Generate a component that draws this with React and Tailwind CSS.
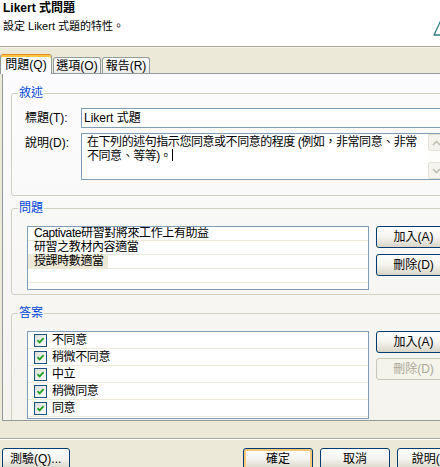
import React from "react";

const Btn = ({ children, className = "", disabled = false, def = false }) => (
  <div
    className={`flex h-[22px] shrink-0 items-center justify-center rounded-[3px] border leading-[14px] ${
      disabled
        ? "border-[#c9c7ba] bg-[#f5f4ea] text-[#aca899]"
        : "border-[#003c74] bg-linear-to-b from-white via-[#f4f3ee] to-[#d9d5c8] text-black"
    } ${def ? "shadow-[inset_0_0_0_2px_#f6c67a]" : ""} ${className}`}
  >
    {children}
  </div>
);

const Check = () => (
  <span className="flex h-[13px] w-[13px] shrink-0 items-center justify-center border border-[#1c5180] bg-linear-to-br from-[#dcdcd7] to-white">
    <svg width="9" height="9" viewBox="0 0 9 9">
      <path d="M1.5 4.2 L3.6 6.4 L7.6 2.2" fill="none" stroke="#21a121" strokeWidth="1.8" />
    </svg>
  </span>
);

const Legend = ({ children }) => (
  <legend className="ml-[6px] px-[1px] leading-[14px] text-[#0046d5]">{children}</legend>
);

const ScrollBtn = ({ up }) => (
  <div className="flex h-[17px] items-center justify-center rounded-[2px] border border-[#e3e1d6] bg-[#f4f3ee]">
    <svg width="9" height="6" viewBox="0 0 9 6">
      <path
        d={up ? "M1 5 L4.5 1.5 L8 5" : "M1 1 L4.5 4.5 L8 1"}
        fill="none"
        stroke="#c2c0b4"
        strokeWidth="1.6"
      />
    </svg>
  </div>
);

export default function App() {
  const questions = ["Captivate研習對將來工作上有助益", "研習之教材內容適當", "授課時數適當", "", ""];
  const answers = ["不同意", "稍微不同意", "中立", "稍微同意", "同意"];
  return (
    <div className="relative h-[467px] w-[440px] overflow-hidden bg-[#ece9d8] font-['Liberation_Sans','Noto_Sans_CJK_TC',sans-serif] text-[12px] leading-[14px] text-black">
      <div className="w-[476px]">
        {/* header */}
        <div className="h-[46px] bg-white pl-[3px] pt-[1px]">
          <div className="font-bold leading-[14px]">Likert 式問題</div>
          <div className="mt-[4px] text-[11px] leading-[14px]">設定 Likert 式題的特性。</div>
        </div>
        <div className="h-[1px] bg-[#aca899]" />
        <div className="h-[1px] bg-[#f4f3ee]" />

        {/* tabs */}
        <div className="flex h-[26px] items-end border-b border-[#919b9c]">
          <div className="relative z-10 mb-[-1px] flex h-[20px] w-[52px] items-center justify-center rounded-t-[3px] border border-b-0 border-[#919b9c] border-t-[#e68b2c] bg-[#fcfcfe] shadow-[inset_0_2px_0_#ffc73c]">
            問題(Q)
          </div>
          <div className="ml-[1px] flex h-[16px] w-[48px] items-center justify-center rounded-t-[3px] border border-b-0 border-[#919b9c] bg-linear-to-b from-white to-[#ecebe6]">
            選項(O)
          </div>
          <div className="ml-[1px] flex h-[16px] w-[48px] items-center justify-center rounded-t-[3px] border border-b-0 border-[#919b9c] bg-linear-to-b from-white to-[#ecebe6]">
            報告(R)
          </div>
        </div>

        {/* tab page */}
        <div className="ml-[2px] h-[347px] overflow-hidden border-b border-l border-[#919b9c] bg-linear-to-b from-[#fcfcfe] to-[#f4f3ee] pl-[8px] pr-[9px]">
          {/* 敘述 */}
          <fieldset className="m-0 mt-[12px] min-w-0 rounded-[3px] border border-[#d0d0bf] p-0">
            <Legend>敘述</Legend>
            <div className="pb-[15px] pl-[13px] pt-[8px]">
              <div className="flex items-center">
                <span className="w-[56px] shrink-0">標題(T):</span>
                <div className="h-[20px] w-[365px] shrink-0 border border-[#7f9db9] bg-white pl-[2px] leading-[18px]">
                  Likert 式題
                </div>
              </div>
              <div className="mt-[5px] flex items-start">
                <span className="w-[56px] shrink-0 pt-[3px]">說明(D):</span>
                <div className="flex h-[47px] w-[365px] shrink-0 border border-[#7f9db9] bg-white">
                  <div className="flex-1 overflow-hidden whitespace-nowrap pl-[5px] pt-[2px] leading-[13px] tracking-[-0.45px]">
                    在下列的述句指示您同意或不同意的程度 (例如，非常同意、非常
                    <br />
                    不同意、等等)。
                    <span className="ml-[1px] inline-block h-[12px] w-[1px] bg-black align-[-1px]" />
                  </div>
                  <div className="flex w-[17px] shrink-0 flex-col bg-[#fdfdfb]">
                    <ScrollBtn up />
                    <div className="flex-1" />
                    <ScrollBtn />
                  </div>
                </div>
              </div>
            </div>
          </fieldset>

          {/* 問題 */}
          <fieldset className="m-0 mt-[5px] min-w-0 rounded-[3px] border border-[#d0d0bf] p-0">
            <Legend>問題</Legend>
            <div className="flex items-start pb-[4px] pl-[15px] pt-[11px]">
              <div className="h-[64px] w-[342px] shrink-0 overflow-hidden border border-[#7f9db9] bg-white tracking-[-0.4px]">
                {questions.map((q, i) => (
                  <div key={i} className="h-[14px] border-b border-[#ece9d8] leading-[13px]">
                    {i === 2 ? (
                      <span className="inline-block h-[13px] bg-[#ece9d8] pl-[6px] pr-[4px]">{q}</span>
                    ) : (
                      <span className="pl-[6px]">{q}</span>
                    )}
                  </div>
                ))}
              </div>
              <div className="ml-[7px] flex flex-col gap-[6px]">
                <Btn className="w-[75px]">加入(A)</Btn>
                <Btn className="w-[75px]">刪除(D)</Btn>
              </div>
            </div>
          </fieldset>

          {/* 答案 */}
          <fieldset className="m-0 mt-[11px] min-w-0 rounded-[3px] border border-[#d0d0bf] p-0">
            <Legend>答案</Legend>
            <div className="flex items-start pb-[4px] pl-[15px] pt-[11px]">
              <div className="h-[88px] w-[342px] shrink-0 overflow-hidden border border-[#7f9db9] bg-white tracking-[-0.4px]">
                {answers.map((a) => (
                  <div key={a} className="flex h-[17px] items-center gap-[5px] border-b border-[#ece9d8] pl-[6px]">
                    <Check />
                    <span className="leading-[14px]">{a}</span>
                  </div>
                ))}
              </div>
              <div className="ml-[7px] flex flex-col gap-[5px]">
                <Btn className="w-[75px]">加入(A)</Btn>
                <Btn className="w-[75px]" disabled>
                  刪除(D)
                </Btn>
              </div>
            </div>
          </fieldset>
        </div>

        {/* bottom */}
        <div className="h-[17px]" />
        <div className="h-[1px] bg-[#aca899]" />
        <div className="h-[1px] bg-white" />
        <div className="h-[8px]" />
        <div className="flex pl-[2px] pr-[9px]">
          <Btn className="w-[68px] justify-start pl-[7px]">測驗(Q)...</Btn>
          <div className="ml-auto flex gap-[7px]">
            <Btn className="w-[70px]" def>
              確定
            </Btn>
            <Btn className="w-[70px]">取消</Btn>
            <Btn className="w-[70px]">說明(H)</Btn>
          </div>
        </div>
      </div>

      {/* partial icon at top right */}
      <svg className="absolute left-[430px] top-[15px]" width="24" height="24" viewBox="0 0 24 24">
        <path d="M4 20 L12 3 L20 20 Z" fill="white" stroke="#2f7f85" strokeWidth="1.3" strokeLinejoin="round" />
      </svg>
    </div>
  );
}
